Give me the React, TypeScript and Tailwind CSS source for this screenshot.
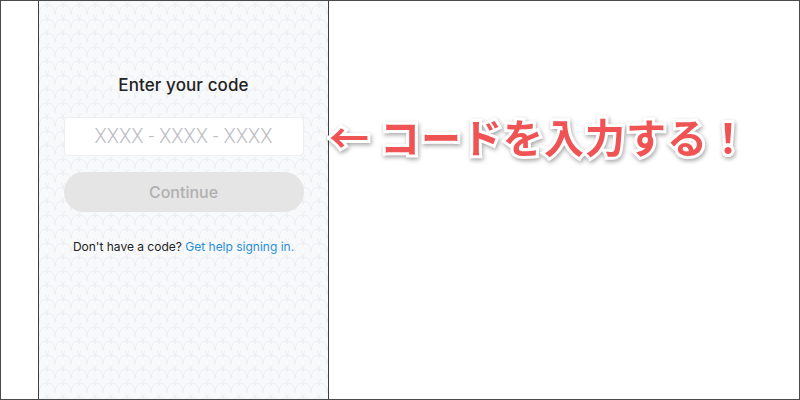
import React from "react";

const ScalePattern: React.FC = () => (
  <svg className="absolute inset-0 w-full h-full" aria-hidden="true">
    <defs>
      <pattern id="scales" width="16" height="14" patternUnits="userSpaceOnUse">
        <path
          d="M0 14 Q0 4 8 4 Q16 4 16 14 M-8 7 Q-8 -3 0 -3 Q8 -3 8 7 M8 7 Q8 -3 16 -3 Q24 -3 24 7"
          fill="none"
          stroke="#eceef1"
          strokeWidth="1"
        />
      </pattern>
    </defs>
    <rect width="100%" height="100%" fill="url(#scales)" />
  </svg>
);

export default function App() {
  return (
    <div className="w-[800px] h-[400px] bg-white border border-[#4a4a4a] flex overflow-hidden font-['Inter','Noto_Sans',sans-serif]">
      <div className="w-[37px] shrink-0" />

      <div className="relative w-[291px] shrink-0 h-full bg-[#f8f9fb] border-x border-[#3f3f3f]">
        <ScalePattern />
        <div className="relative flex flex-col items-center px-6 pt-[72px]">
          <h1 className="text-[17px] font-medium text-[#222] tracking-[0.1px]">
            Enter your code
          </h1>
          <input
            readOnly
            placeholder="XXXX - XXXX - XXXX"
            className="mt-[18px] w-[240px] h-[39px] bg-white border border-[#eceef1] rounded-[4px] text-center font-['Roboto',sans-serif] font-light text-[20px] text-[#bbb] placeholder:text-[#bdbdc3] outline-none"
          />
          <button className="mt-[16px] w-[240px] h-[40px] rounded-full bg-[#e5e5e6] text-[16px] font-medium text-[#b0b0b0]">
            Continue
          </button>
          <p className="mt-[26px] text-[12px] text-[#222]">
            Don&apos;t have a code?{" "}
            <span className="text-[#2a8fd6]">Get help signing in.</span>
          </p>
        </div>
      </div>

      <div className="flex-1 pt-[111px]">
        <p className="text-[40px] leading-[48px] font-bold text-[#f05353] tracking-[1px] whitespace-nowrap font-['Noto_Sans_CJK_JP',sans-serif] [-webkit-text-stroke:6px_white] [paint-order:stroke_fill] drop-shadow-[1px_2px_2px_rgba(0,0,0,0.35)]">
          ← コードを入力する！
        </p>
      </div>
    </div>
  );
}
